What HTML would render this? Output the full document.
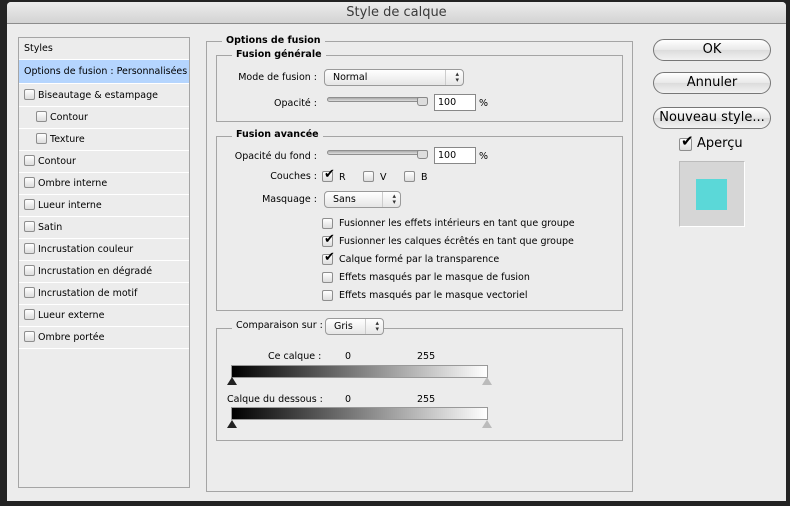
<!DOCTYPE html>
<html><head><meta charset="utf-8"><style>
*{margin:0;padding:0;box-sizing:border-box}
body{width:790px;height:506px;background:#232323;position:relative;overflow:hidden;font-family:"Lucida Grande","DejaVu Sans","Liberation Sans",sans-serif;font-size:10px;color:#000}
.a{position:absolute}
#win{left:7px;top:2px;width:779px;height:499px;background:#ececec;border-radius:4px 4px 0 0}
#title{left:7px;top:2px;width:779px;height:22px;background:linear-gradient(#ececec,#d3d3d3);border-bottom:1px solid #8c8c8c;border-radius:4px 4px 0 0;text-align:center;font-size:13px;line-height:22px;color:#3a3a3a}
#list{left:18px;top:37px;width:172px;height:451px;border:1px solid #a5a5a5;background:#ececec}
.row{position:absolute;left:0;width:170px;height:22px;border-bottom:1px solid #fff;line-height:21px;padding-left:5px;font-size:9.5px}
.cb{position:absolute;width:11px;height:11px;border:1px solid #8e8e8e;border-radius:2px;background:linear-gradient(#fff,#ddd)}
.row .cb{position:relative;display:inline-block;vertical-align:-2px;margin-right:3px}
.fs{position:absolute;border:1px solid #a5a5a5}
.lg{position:absolute;background:#ececec;font-weight:bold;padding:0 4px;font-size:9.5px;line-height:12px}
.lbl{position:absolute;text-align:right;font-size:9.5px}
.pop{position:absolute;height:17px;border:1px solid #9a9a9a;border-radius:4px;background:linear-gradient(#fff,#e6e6e6);font-size:9.5px;line-height:15px;padding-left:8px}
.pop:after{content:"▴\A▾";white-space:pre;position:absolute;right:4px;top:1px;font-size:7px;line-height:6px;color:#333}
.pop:before{content:"";position:absolute;right:17px;top:0;height:15px;border-left:1px solid #ccc}
.slider{position:absolute;height:5px;border:1px solid #8f8f8f;border-radius:3px;background:linear-gradient(#aaa,#ddd)}
.thumb{position:absolute;width:11px;height:9px;background:#ddd;border:1px solid #888;border-radius:2px 2px 3px 3px}
.inp{position:absolute;width:42px;height:17px;border:1px solid #888;background:#fff;font-size:9.5px;line-height:15px;padding-left:3px}
.btn{position:absolute;left:653px;width:118px;height:22px;border:1px solid #777;border-radius:11px;background:linear-gradient(#fff,#e8e8e8 50%,#dcdcdc 51%,#f2f2f2);text-align:center;font-size:13px;line-height:20px}
.chk{position:absolute;font-size:13px;line-height:10px;left:1px;top:-2px}
.t{position:absolute;font-size:9.5px;white-space:nowrap}
.grad{position:absolute;left:231px;width:257px;height:13px;border:1px solid #999;background:linear-gradient(90deg,#000,#fff)}
.tri{position:absolute;width:0;height:0;border-left:5px solid transparent;border-right:5px solid transparent}
</style></head><body>
<div id="win" class="a"></div>
<div id="title" class="a">Style de calque</div>

<div id="list" class="a">
<div class="row" style="top:0">Styles</div>
<div class="row" style="top:22px;background:#b5d5fe;height:24px;line-height:23px">Options de fusion : Personnalisées</div>
<div class="row" style="top:47px"><span class="cb"></span>Biseautage &amp; estampage</div>
<div class="row" style="top:69px;padding-left:17px"><span class="cb"></span>Contour</div>
<div class="row" style="top:91px;padding-left:17px"><span class="cb"></span>Texture</div>
<div class="row" style="top:113px"><span class="cb"></span>Contour</div>
<div class="row" style="top:135px"><span class="cb"></span>Ombre interne</div>
<div class="row" style="top:157px"><span class="cb"></span>Lueur interne</div>
<div class="row" style="top:179px"><span class="cb"></span>Satin</div>
<div class="row" style="top:201px"><span class="cb"></span>Incrustation couleur</div>
<div class="row" style="top:223px"><span class="cb"></span>Incrustation en dégradé</div>
<div class="row" style="top:245px"><span class="cb"></span>Incrustation de motif</div>
<div class="row" style="top:267px"><span class="cb"></span>Lueur externe</div>
<div class="row" style="top:289px"><span class="cb"></span>Ombre portée</div>
</div>

<div class="fs" style="left:206px;top:41px;width:427px;height:451px"></div>
<div class="lg" style="left:222px;top:35px">Options de fusion</div>

<div class="fs" style="left:216px;top:55px;width:407px;height:67px"></div>
<div class="lg" style="left:232px;top:49px">Fusion générale</div>
<div class="lbl" style="left:220px;width:97px;top:72px">Mode de fusion :</div>
<div class="pop" style="left:324px;top:69px;width:140px">Normal</div>
<div class="lbl" style="left:220px;width:97px;top:98px">Opacité :</div>
<div class="slider" style="left:327px;top:97px;width:100px"></div>
<div class="thumb" style="left:417px;top:97px"></div>
<div class="inp" style="left:434px;top:94px">100</div>
<div class="t" style="left:479px;top:98px">%</div>

<div class="fs" style="left:216px;top:136px;width:407px;height:175px"></div>
<div class="lg" style="left:232px;top:129px">Fusion avancée</div>
<div class="lbl" style="left:220px;width:97px;top:151px">Opacité du fond :</div>
<div class="slider" style="left:327px;top:150px;width:100px"></div>
<div class="thumb" style="left:417px;top:150px"></div>
<div class="inp" style="left:434px;top:147px">100</div>
<div class="t" style="left:479px;top:151px">%</div>
<div class="lbl" style="left:220px;width:97px;top:171px">Couches :</div>
<div class="cb" style="left:322px;top:171px"><span class="chk">✔</span></div><div class="t" style="left:339px;top:172px">R</div>
<div class="cb" style="left:363px;top:171px"></div><div class="t" style="left:380px;top:172px">V</div>
<div class="cb" style="left:404px;top:171px"></div><div class="t" style="left:421px;top:172px">B</div>
<div class="lbl" style="left:220px;width:97px;top:194px">Masquage :</div>
<div class="pop" style="left:324px;top:191px;width:77px">Sans</div>
<div class="cb" style="left:322px;top:218px"></div><div class="t" style="left:339px;top:218px">Fusionner les effets intérieurs en tant que groupe</div>
<div class="cb" style="left:322px;top:236px"><span class="chk">✔</span></div><div class="t" style="left:339px;top:236px">Fusionner les calques écrêtés en tant que groupe</div>
<div class="cb" style="left:322px;top:254px"><span class="chk">✔</span></div><div class="t" style="left:339px;top:254px">Calque formé par la transparence</div>
<div class="cb" style="left:322px;top:272px"></div><div class="t" style="left:339px;top:272px">Effets masqués par le masque de fusion</div>
<div class="cb" style="left:322px;top:290px"></div><div class="t" style="left:339px;top:290px">Effets masqués par le masque vectoriel</div>

<div class="fs" style="left:216px;top:328px;width:407px;height:113px"></div>
<div class="lg" style="left:232px;top:320px;font-weight:normal;width:150px;height:16px;line-height:12px">Comparaison sur :</div>
<div class="pop" style="left:325px;top:318px;width:59px">Gris</div>
<div class="t" style="left:268px;top:351px">Ce calque :</div>
<div class="t" style="left:345px;top:351px">0</div>
<div class="t" style="left:417px;top:351px">255</div>
<div class="grad" style="top:365px"></div>
<div class="tri" style="left:227px;top:377px;border-bottom:8px solid #222"></div>
<div class="tri" style="left:482px;top:377px;border-bottom:8px solid #bbb"></div>
<div class="t" style="left:227px;top:394px">Calque du dessous :</div>
<div class="t" style="left:345px;top:394px">0</div>
<div class="t" style="left:417px;top:394px">255</div>
<div class="grad" style="top:407px"></div>
<div class="tri" style="left:227px;top:420px;border-bottom:8px solid #222"></div>
<div class="tri" style="left:482px;top:420px;border-bottom:8px solid #bbb"></div>

<div class="btn" style="top:39px">OK</div>
<div class="btn" style="top:72px">Annuler</div>
<div class="btn" style="top:107px">Nouveau style...</div>
<div class="cb" style="left:679px;top:138px;width:13px;height:13px"><span class="chk" style="font-size:15px;top:-3px">✔</span></div>
<div class="t" style="left:697px;top:136px;font-size:13px">Aperçu</div>
<div class="a" style="left:679px;top:161px;width:66px;height:66px;background:#d6d6d6;border:1px solid #bbb;border-right-color:#fff;border-bottom-color:#fff"></div>
<div class="a" style="left:696px;top:179px;width:31px;height:31px;background:#5bd8d8"></div>
</body></html>
